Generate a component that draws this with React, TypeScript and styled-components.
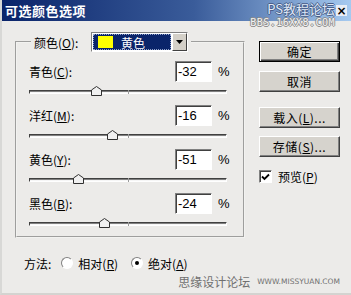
import React from "react";
import styled, { createGlobalStyle } from "styled-components";

const GlobalStyle = createGlobalStyle`
  html, body {
    margin: 0;
    padding: 0;
    background: #ecebe9;
  }
  body {
    font-family: "Noto Sans CJK SC", "Liberation Sans", sans-serif;
    font-size: 12px;
    color: #000;
  }
`;

const Dialog = styled.div`
  position: relative;
  width: 351px;
  height: 295px;
  box-sizing: border-box;
  background: #ecebe9;
  border-left: 2px solid #d8d8d6;
  border-bottom: 2px solid #d4d3d0;
  overflow: hidden;
`;

const TitleBar = styled.div`
  position: relative;
  height: 21px;
  display: flex;
  align-items: center;
  padding-left: 3px;
  background: linear-gradient(to right, #0a246a 0%, #3a5c9a 55%, #a6caf0 100%);
`;

const Title = styled.span`
  color: #fff;
  font-weight: bold;
  font-size: 13px;
  letter-spacing: 0.5px;
`;

const Stamp = styled.div`
  position: absolute;
  top: 2px;
  right: 16px;
  display: flex;
  flex-direction: column;
  align-items: flex-end;
  line-height: 1;
  z-index: 2;
`;

const StampMain = styled.span`
  font-size: 13px;
  color: #dfe8f6;
  text-shadow: 1px 0 #4a5f8a, -1px 0 #4a5f8a, 0 1px #4a5f8a, 0 -1px #4a5f8a;
`;

const StampSub = styled.span`
  margin-top: 3px;
  font-family: "DejaVu Sans Mono", monospace;
  font-size: 10px;
  letter-spacing: 0.5px;
  color: #f2f2f2;
  text-shadow: 1px 0 #8c8c8c, -1px 0 #8c8c8c, 0 1px #8c8c8c, 0 -1px #8c8c8c;
`;

const CloseBox = styled.span`
  position: absolute;
  top: 5px;
  right: 4px;
  width: 11px;
  height: 11px;
  display: flex;
  align-items: center;
  justify-content: center;
  background: #e9eef6;
  color: #000;
  font-family: "DejaVu Sans", sans-serif;
  font-weight: bold;
  font-size: 12px;
  line-height: 1;
  z-index: 3;
`;

const Body = styled.div`
  display: flex;
  padding: 11px 0 0 13px;
`;

const Group = styled.fieldset`
  width: 230px;
  box-sizing: border-box;
  margin: 0;
  padding: 9px 16px 2px 12px;
  border: 2px groove #f2f2f0;
  display: flex;
  flex-direction: column;
  gap: 3px;
`;

const Legend = styled.legend`
  display: flex;
  align-items: center;
  margin-left: 2px;
  padding: 0 3px;
`;

const LegendLabel = styled.span`
  width: 57px;
`;

const Select = styled.div`
  width: 97px;
  height: 20px;
  box-sizing: border-box;
  display: flex;
  border: 1px solid;
  border-color: #808080 #fff #fff #808080;
  background: #fff;
`;

const SelectValue = styled.div`
  flex: 1;
  display: flex;
  align-items: center;
  gap: 8px;
  padding-left: 4px;
  margin: 1px;
  background: #0a246a;
  color: #fff;
  border: 1px dotted #8fa0c8;
`;

const Swatch = styled.span<{ $color: string }>`
  width: 15px;
  height: 12px;
  background: ${(p) => p.$color};
`;

const DropButton = styled.div`
  width: 15px;
  box-sizing: border-box;
  display: flex;
  align-items: center;
  justify-content: center;
  background: #d4d0c8;
  border: 1px solid;
  border-color: #fff #404040 #404040 #fff;
`;

const Row = styled.div`
  display: flex;
  flex-direction: column;
`;

const RowHead = styled.div`
  display: flex;
  align-items: center;
  height: 21px;
`;

const Label = styled.span`
  flex: 1;
`;

const NumInput = styled.div`
  width: 37px;
  height: 21px;
  box-sizing: border-box;
  border: 1px solid;
  border-color: #808080 #fff #fff #808080;
  box-shadow: inset 1px 1px #404040;
  background: #fff;
  display: flex;
  align-items: center;
  padding-left: 2px;
  font-family: "Liberation Sans", sans-serif;
  font-size: 13px;
`;

const Percent = styled.span`
  width: 15px;
  padding-left: 6px;
  box-sizing: border-box;
  font-family: "Liberation Sans", sans-serif;
  font-size: 13px;
`;

const SliderBox = styled.div`
  position: relative;
  height: 20px;
`;

const Track = styled.div`
  position: absolute;
  top: 8px;
  left: 0;
  right: 0;
  height: 4px;
  box-sizing: border-box;
  border: 1px solid;
  border-color: #404040 #fff #fff #404040;
  background: #f6f6f6;
  box-shadow: 0 1px #808080 inset;
`;

const Tick = styled.div`
  position: absolute;
  top: 8px;
  left: 50%;
  width: 1px;
  height: 4px;
  background: #9a9a9a;
`;

const Thumb = styled.svg<{ $pos: number }>`
  position: absolute;
  top: 4px;
  left: ${(p) => p.$pos}px;
`;

const Side = styled.div`
  margin-left: 14px;
  padding-top: 9px;
  display: flex;
  flex-direction: column;
  width: 81px;
`;

const Button = styled.div<{ $default?: boolean; $gap?: number }>`
  height: 21px;
  box-sizing: border-box;
  margin-top: ${(p) => p.$gap ?? 0}px;
  display: flex;
  align-items: center;
  justify-content: center;
  background: #d6d3cd;
  border: 1px solid;
  border-color: ${(p) => (p.$default ? "#000" : "#fff #404040 #404040 #fff")};
  box-shadow: ${(p) =>
    p.$default
      ? "inset 1px 1px #fff, inset -1px -1px #404040, inset -2px -2px #808080"
      : "inset -1px -1px #808080"};
  letter-spacing: 0.5px;
`;

const Check = styled.label`
  margin-top: 11px;
  display: flex;
  align-items: center;
  gap: 6px;
`;

const CheckBox = styled.span`
  width: 13px;
  height: 13px;
  box-sizing: border-box;
  background: #fff;
  border: 1px solid;
  border-color: #808080 #fff #fff #808080;
  box-shadow: inset 1px 1px #404040;
  display: flex;
  align-items: center;
  justify-content: center;
`;

const Footer = styled.div`
  display: flex;
  align-items: center;
  padding: 17px 0 0 22px;
  height: 16px;
`;

const FooterLabel = styled.span`
  margin-right: 10px;
`;

const Radio = styled.span<{ $on?: boolean }>`
  width: 12px;
  height: 12px;
  box-sizing: border-box;
  border-radius: 50%;
  border: 1px solid;
  border-color: #808080 #fff #fff #808080;
  background: #fff;
  display: flex;
  align-items: center;
  justify-content: center;
  margin-right: 5px;
  &::after {
    content: "";
    width: 4px;
    height: 4px;
    border-radius: 50%;
    background: ${(p) => (p.$on ? "#000" : "transparent")};
  }
`;

const RadioText = styled.span`
  margin-right: 13px;
`;

const Credit = styled.div`
  position: absolute;
  right: 11px;
  bottom: 3px;
  display: flex;
  align-items: center;
  gap: 7px;
  color: #707070;
`;

const CreditMain = styled.span`
  font-size: 12px;
`;

const CreditSub = styled.span`
  font-family: "DejaVu Sans", sans-serif;
  font-size: 7.5px;
`;

const TRACK_WIDTH = 198;

const rows = [
  { label: "青色", key: "C", value: -32 },
  { label: "洋红", key: "M", value: -16 },
  { label: "黄色", key: "Y", value: -51 },
  { label: "黑色", key: "B", value: -24 },
];

function Slider({ value }: { value: number }) {
  const pos = Math.round(((value + 100) / 200) * TRACK_WIDTH) - 5;
  return (
    <SliderBox>
      <Track />
      <Tick />
      <Thumb $pos={pos} width="11" height="10" viewBox="0 0 11 10">
        <path d="M0.5 9.5 V4 L5.5 0.5 L10.5 4 V9.5 Z" fill="#f0f0f0" stroke="#303030" />
      </Thumb>
    </SliderBox>
  );
}

export default function App() {
  return (
    <>
      <GlobalStyle />
      <Dialog>
        <TitleBar>
          <Title>可选颜色选项</Title>
          <Stamp>
            <StampMain>PS教程论坛</StampMain>
            <StampSub>BBS.16XX8.COM</StampSub>
          </Stamp>
          <CloseBox>×</CloseBox>
        </TitleBar>

        <Body>
          <Group>
            <Legend>
              <LegendLabel>
                颜色(<u>O</u>):
              </LegendLabel>
              <Select>
                <SelectValue>
                  <Swatch $color="#ffff00" />
                  黄色
                </SelectValue>
                <DropButton>
                  <svg width="7" height="4" viewBox="0 0 7 4">
                    <path d="M0 0 H7 L3.5 4 Z" fill="#000" />
                  </svg>
                </DropButton>
              </Select>
            </Legend>

            {rows.map((r) => (
              <Row key={r.key}>
                <RowHead>
                  <Label>
                    {r.label}(<u>{r.key}</u>):
                  </Label>
                  <NumInput>{r.value}</NumInput>
                  <Percent>%</Percent>
                </RowHead>
                <Slider value={r.value} />
              </Row>
            ))}
          </Group>

          <Side>
            <Button $default>确定</Button>
            <Button $gap={9}>取消</Button>
            <Button $gap={15}>
              载入(<u>L</u>)...
            </Button>
            <Button $gap={8}>
              存储(<u>S</u>)...
            </Button>
            <Check>
              <CheckBox>
                <svg width="9" height="8" viewBox="0 0 9 8">
                  <path d="M1 3.5 L3.5 6 L8 1.5" fill="none" stroke="#000" strokeWidth="1.8" />
                </svg>
              </CheckBox>
              <span>
                预览(<u>P</u>)
              </span>
            </Check>
          </Side>
        </Body>

        <Footer>
          <FooterLabel>方法:</FooterLabel>
          <Radio />
          <RadioText>
            相对(<u>R</u>)
          </RadioText>
          <Radio $on />
          <RadioText>
            绝对(<u>A</u>)
          </RadioText>
        </Footer>

        <Credit>
          <CreditMain>思缘设计论坛</CreditMain>
          <CreditSub>WWW.MISSYUAN.COM</CreditSub>
        </Credit>
      </Dialog>
    </>
  );
}
